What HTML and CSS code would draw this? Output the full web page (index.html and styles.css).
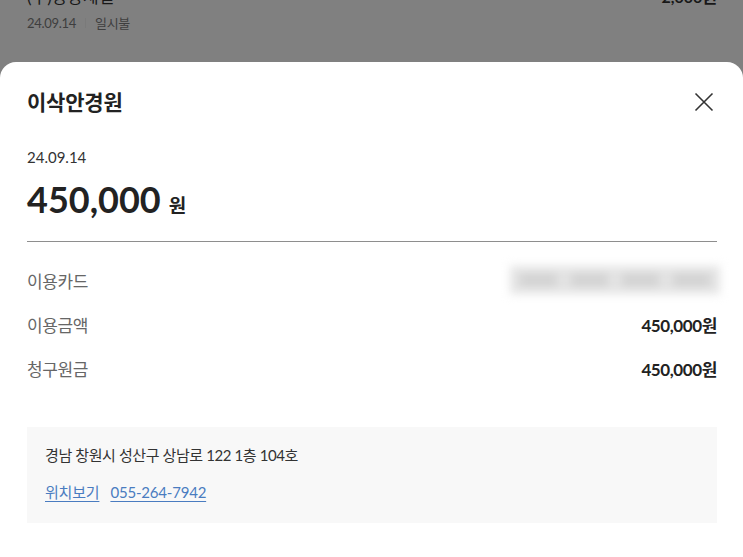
FILE: index.html
```html
<!DOCTYPE html>
<html lang="ko">
<head>
<meta charset="utf-8">
<title>이삭안경원</title>
<link rel="stylesheet" href="styles.css">
</head>
<body>
<div class="bg-list">
  <div class="bg-row">
    <span class="bg-name">(주)상상제일</span>
    <span class="bg-amount">2,000원</span>
  </div>
  <div class="bg-meta">
    <span>24.09.14</span>
    <span class="bg-sep"></span>
    <span>일시불</span>
  </div>
</div>
<div class="sheet">
  <div class="sheet-head">
    <h1 class="title">이삭안경원</h1>
    <button class="close" aria-label="닫기">
      <svg width="20" height="20" viewBox="0 0 20 20"><path d="M1.5 1.5 L18.5 18.5 M18.5 1.5 L1.5 18.5" stroke="#333" stroke-width="1.6" fill="none"/></svg>
    </button>
  </div>
  <div class="date">24.09.14</div>
  <div class="amount"><span class="amount-num">450,000</span><span class="amount-unit">원</span></div>
  <div class="divider"></div>
  <div class="rows">
    <div class="row">
      <span class="label">이용카드</span>
      <span class="blurred"><span class="b1"></span><span class="b2"></span><span class="b3"></span><span class="b4"></span></span>
    </div>
    <div class="row">
      <span class="label">이용금액</span>
      <span class="value">450,000원</span>
    </div>
    <div class="row">
      <span class="label">청구원금</span>
      <span class="value">450,000원</span>
    </div>
  </div>
  <div class="info">
    <div class="address">경남 창원시 성산구 상남로 122 1층 104호</div>
    <div class="links">
      <a class="link" href="#">위치보기</a>
      <a class="link" href="#">055-264-7942</a>
    </div>
  </div>
</div>
</body>
</html>
```
FILE: styles.css
```css
html, body {
  margin: 0;
  padding: 0;
}
body {
  background: #808080;
  font-family: Lato, "Noto Sans CJK KR", sans-serif;
  height: 557px;
  overflow: hidden;
  display: flex;
  flex-direction: column;
}
.bg-list {
  height: 62px;
  flex: none;
  overflow: hidden;
  padding: 0 26px 0 27px;
  box-sizing: border-box;
}
.bg-row {
  margin-top: -15px;
  display: flex;
  justify-content: space-between;
  font-size: 17px;
  line-height: 24px;
  color: #181818;
}
.bg-amount {
  font-weight: 700;
  font-size: 16px;
}
.bg-meta {
  margin-top: 5px;
  display: flex;
  align-items: center;
  gap: 9px;
  font-size: 13px;
  line-height: 18px;
  color: #3e3e3e;
  letter-spacing: -0.3px;
}
.bg-sep {
  width: 1px;
  height: 10px;
  background: #7a7a7a;
}
.sheet {
  flex: 1;
  background: #fff;
  border-radius: 16px 16px 0 0;
  padding: 26px 26px 0 27px;
  display: flex;
  flex-direction: column;
}
.sheet-head {
  display: flex;
  justify-content: space-between;
  align-items: center;
  height: 28px;
}
.title {
  margin: 0;
  font-size: 21px;
  line-height: 28px;
  font-weight: 700;
  color: #222;
  letter-spacing: -0.2px;
}
.close {
  border: 0;
  background: none;
  padding: 0;
  margin-right: 3px;
  width: 20px;
  height: 20px;
  display: flex;
}
.date {
  margin-top: 31px;
  font-size: 15px;
  line-height: 20px;
  color: #333;
}
.amount {
  margin-top: 10px;
  height: 44px;
  display: flex;
  align-items: baseline;
  color: #222;
}
.amount-num {
  font-size: 36px;
  line-height: 44px;
  font-weight: 700;
}
.amount-unit {
  font-size: 19px;
  font-weight: 700;
  margin-left: 8px;
}
.divider {
  margin-top: 20px;
  height: 1px;
  background: #8e8e8e;
}
.rows {
  margin-top: 16px;
  display: flex;
  flex-direction: column;
}
.row {
  height: 44px;
  display: flex;
  justify-content: space-between;
  align-items: center;
}
.label {
  font-size: 17px;
  color: #666;
  letter-spacing: -0.4px;
}
.value {
  font-size: 17px;
  font-weight: 700;
  color: #222;
  letter-spacing: -0.4px;
}
.blurred {
  width: 210px;
  height: 28px;
  margin-right: -3px;
  background: #e4e4e4;
  filter: blur(5px);
  display: flex;
  align-items: center;
  gap: 14px;
  padding: 0 10px;
  box-sizing: border-box;
}
.blurred span {
  height: 12px;
  background: #d2d2d2;
  flex: 1;
}
.info {
  margin-top: 37px;
  background: #f8f8f8;
  padding: 18px 18px 21px 18px;
  display: flex;
  flex-direction: column;
  gap: 17px;
}
.address {
  font-size: 15px;
  line-height: 20px;
  color: #333;
  letter-spacing: -0.4px;
}
.links {
  display: flex;
  gap: 11px;
  line-height: 20px;
}
.link {
  font-size: 15px;
  color: #4a7cc0;
  text-decoration: underline;
  text-underline-offset: 3px;
  letter-spacing: -0.2px;
}
```
